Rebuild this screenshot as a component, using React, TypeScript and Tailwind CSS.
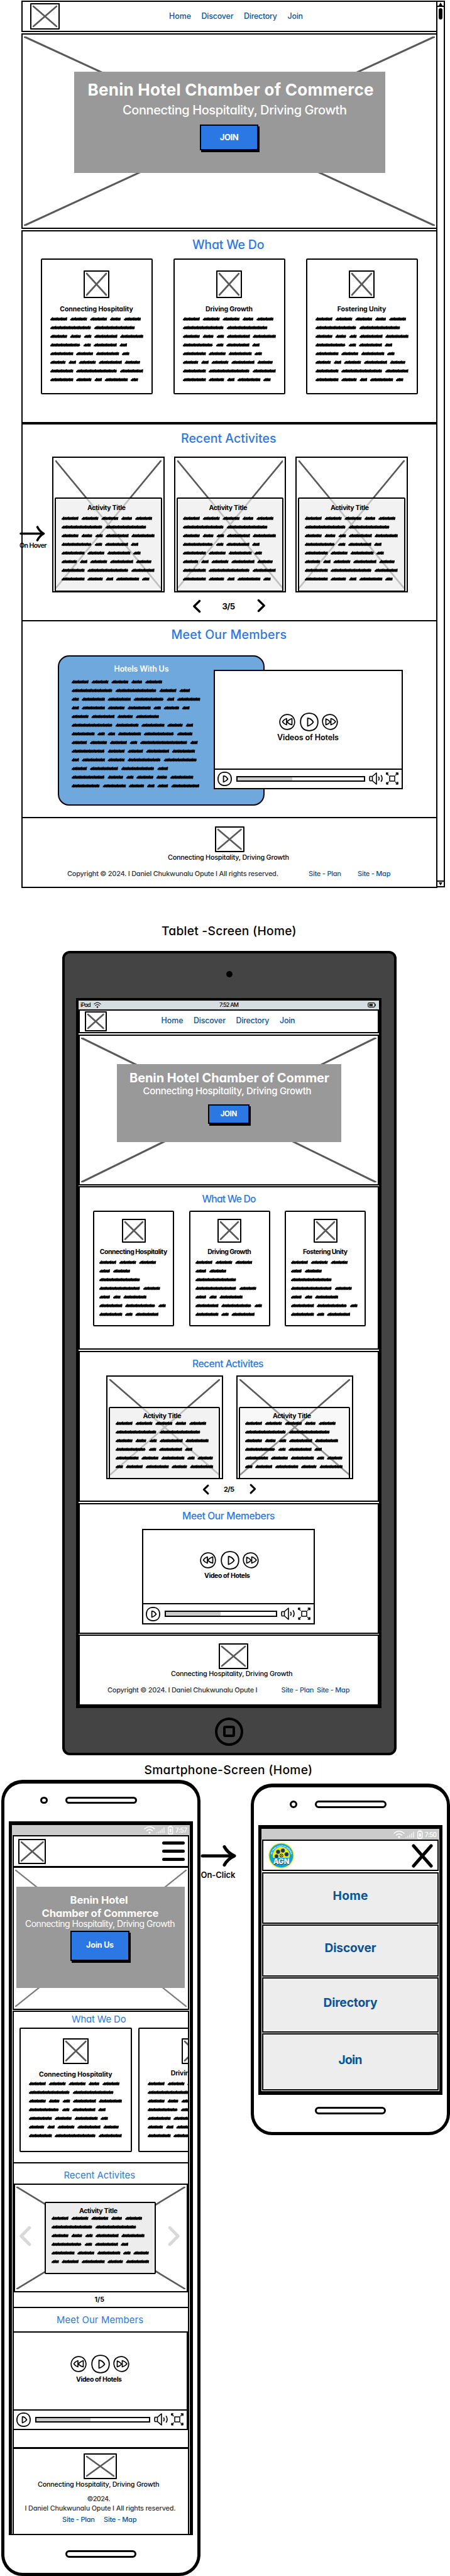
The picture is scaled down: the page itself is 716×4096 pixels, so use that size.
import { useLayoutEffect, useRef, useState, type ReactNode } from "react";

const INK = "#000";

/* One line of text whose tracking is adjusted so that it fills its box. */
function Fit({ children, className }: { children: string; className: string }) {
  const box = useRef<HTMLDivElement>(null);
  const text = useRef<HTMLSpanElement>(null);
  const [tracking, setTracking] = useState(0);
  useLayoutEffect(() => {
    if (!box.current || !text.current) return;
    const room = box.current.getBoundingClientRect().width;
    const natural = text.current.getBoundingClientRect().width;
    setTracking((room - natural) / Math.max(1, children.length - 1));
  }, [children]);
  return (
    <div ref={box} className={`shrink-0 leading-none whitespace-nowrap ${className}`}>
      <span ref={text} className="inline-block" style={{ letterSpacing: tracking }}>
        {children}
      </span>
    </div>
  );
}

function CrossLines({ className = "", stroke = 3, color = "#595959" }: { className?: string; stroke?: number; color?: string }) {
  return (
    <svg className={className} viewBox="0 0 100 100" preserveAspectRatio="none" width="100%" height="100%">
      <g stroke={color} strokeWidth={stroke} strokeLinecap="round">
        <line x1="0" y1="0" x2="100" y2="100" vectorEffect="non-scaling-stroke" />
        <line x1="100" y1="0" x2="0" y2="100" vectorEffect="non-scaling-stroke" />
      </g>
    </svg>
  );
}

function Placeholder({ className }: { className: string }) {
  return (
    <div className={`shrink-0 rounded-[1px] border-2 border-black bg-white p-[3px] ${className}`}>
      <CrossLines className="block overflow-visible" stroke={2.6} />
    </div>
  );
}

/* Word widths, in pixels, for each line of scribbled copy. */
const XS = 11.4, S = 17.2, M = 24.4, L = 26.8, XL = 36.3, F = 44.8, E = 48, N = 52.6, C = 65, D = 75;

const CARD = [[L, L, L, S, L], [C, C], [L, S, XS, XL, XL], [E, XS, XL, XS], [XL, L, XL, XS], [M, XS, L, XL, M], [XL, C, XL], [XL, M, XS, XL, XS]];
const CARD_SHORT = CARD.slice(0, 7);
const CARD_NARROW = [[L, L, L], [S, L], [C], [C, L], [S, XS, XL], [XL, E, XS], [XL, XS, XL]];
const ACTIVITY = [[L, L, L, S, L], [C, C], [L, S, XS, XL, XL], [E, XS, XL, XS], [XL, L, XL, XS, M], [XS, L, XL, M, XL]];
const MEMBERS = [
  [L, L, L, S, L],
  [C, C, L, S],
  [XS, XL, XL, E, XS, XL],
  [XS, XL, L, XL, XS, M, XS],
  [L, XL, M, XL],
  [C, XL, XL, M, XS],
  [XL, XS, XS, XL, E, M],
  [M, L, L, XS, D, XS],
  [N, L, M, XL, XL],
  [XS, XL, L, N, N],
  [M, F, N, S],
  [N, M, XS, L, S, XL],
  [F, XL, M, XS, S, F],
];

const PITCH = 13.78;

function Scribble({ lines, className }: { lines: number[][]; className: string }) {
  let thin = "";
  let thick = "";
  lines.forEach((words, row) => {
    let x = 0;
    const y = row * PITCH + 3.2;
    words.forEach((w, i) => {
      const end = x + w - 0.6;
      let px = x + 0.8;
      thin += `M${px} ${y + 1.4}`;
      let k = i + row;
      while (px < end - 1.8) {
        const rise = k % 3 === 0 ? 1.9 : 1.4;
        thin += `L${Math.min(px + 2.7, end)} ${y - rise}L${Math.min(px + 2, end)} ${y + 1.8}`;
        px += 2.5;
        k += 1;
      }
      thick += `M${x + 1.4} ${y + 0.5}H${end - 0.8}`;
      x += w + 4.9;
    });
  });
  const height = (lines.length - 1) * PITCH + 6.4;
  return (
    <svg className={`block shrink-0 ${className}`} width="214" height={height} viewBox={`0 0 214 ${height}`}>
      <path d={thin} fill="none" stroke={INK} strokeWidth="1.9" strokeLinecap="round" strokeLinejoin="round" />
      <path d={thick} fill="none" stroke={INK} strokeWidth="2.1" strokeLinecap="round" />
    </svg>
  );
}

function Chevron({ dir, className, color = INK, stroke = 3.4 }: { dir: "left" | "right"; className: string; color?: string; stroke?: number }) {
  return (
    <svg className={`shrink-0 overflow-visible ${className}`} viewBox="0 0 10 20" preserveAspectRatio="none">
      <path
        d={dir === "left" ? "M8.8 1.5L1.5 10L8.8 18.5" : "M1.2 1.5L8.5 10L1.2 18.5"}
        fill="none"
        stroke={color}
        strokeWidth={stroke}
        strokeLinecap="round"
        strokeLinejoin="round"
        vectorEffect="non-scaling-stroke"
      />
    </svg>
  );
}

function Arrow({ className }: { className: string }) {
  return (
    <svg className={`shrink-0 overflow-visible ${className}`} viewBox="0 0 55 34">
      <path d="M2 17H52M37 2.5Q42 12 53 17Q42 22 37 31.5" fill="none" stroke={INK} strokeWidth="5" strokeLinecap="round" strokeLinejoin="round" />
    </svg>
  );
}

function Tri({ d }: { d: string }) {
  return <path d={d} fill="none" stroke={INK} strokeWidth="1.7" strokeLinejoin="round" />;
}

function RewindIcon() {
  return (
    <svg className="shrink-0" width="26" height="26" viewBox="0 0 26 26">
      <path d="M13 1.2C20 1 25 6.500 24.800 13.500C24.500 20.500 19 24.800 13 24.800C6.500 24.800 1.200 20 1.200 13C1.200 6.500 6 1.400 13 1.200Z" fill="none" stroke={INK} strokeWidth="1.7" />
      <Tri d="M12 7.500Q7 9.500 5.500 12.800Q8 16.500 12 17.500Z" />
      <Tri d="M20.500 7.500Q15 9.500 12.500 12.800Q16 16.500 20.500 17.500Z" />
    </svg>
  );
}

function ForwardIcon() {
  return (
    <svg className="shrink-0" width="26" height="26" viewBox="0 0 26 26">
      <path d="M12.500 1.200C20 1 24.800 7 24.800 13.500C24.500 20 20 24.800 14 24.800C6 24.500 1 19 1.200 11C1.500 5 6.500 1.400 12.500 1.200Z" fill="none" stroke={INK} strokeWidth="1.7" />
      <Tri d="M6.500 8V17.500Q10.500 16.500 13.500 13Q11 9.500 6.500 8Z" />
      <Tri d="M14.500 7.500V17.500Q19 16.500 22 12.800Q19 8.500 14.500 7.500Z" />
    </svg>
  );
}

function PlayIcon({ size }: { size: number }) {
  return (
    <svg className="shrink-0" width={size} height={size} viewBox="0 0 30 30">
      <path d="M15 1.200C23 1.200 28.800 6 28.800 15C28.800 24 23 28.800 15 28.800C7 28.800 1.200 24 1.200 15C1.200 6 7 1.200 15 1.200Z" fill="none" stroke={INK} strokeWidth={size > 25 ? 1.8 : 2.3} />
      <path d="M12.500 9V21.500Q18 20 21.500 15.300Q18 9 12.500 9Z" fill="none" stroke={INK} strokeWidth={size > 25 ? 1.8 : 2.3} strokeLinejoin="round" />
    </svg>
  );
}

function SpeakerIcon() {
  return (
    <svg className="shrink-0" width="22" height="20" viewBox="0 0 22 20" fill="none" stroke={INK} strokeWidth="1.6" strokeLinejoin="round" strokeLinecap="round">
      <path d="M1.500 6.500H5.500V13.500H1.500Q0.500 10 1.500 6.500ZM5.500 6.500L12 1V19L5.500 13.500" />
      <path d="M15.500 7.500Q17 10 15.500 12.500M19.500 5Q22.500 10 19.500 14.500" />
    </svg>
  );
}

function FullscreenIcon() {
  return (
    <svg className="shrink-0" width="20" height="20" viewBox="0 0 20 20" fill="none" stroke={INK} strokeWidth="1.5" strokeLinecap="round" strokeLinejoin="round">
      <path d="M6 6H14V14H6Z" />
      <path d="M1 1.500L3.800 4.500M19 1.500L15.500 4.500M1.500 18.500L4 15.500M18.800 18.500L15.500 15.500" />
      <path d="M1 3V1.200H3M16.500 1.200H19V3.500M1.300 16.500V18.600H3.200M16.500 18.600H18.800V16" strokeWidth="1.900" />
    </svg>
  );
}

function Video({ caption, className, iconsClass, captionClass, fillClass }: { caption: string; className: string; iconsClass: string; captionClass: string; fillClass: string }) {
  return (
    <div className={`flex shrink-0 flex-col border-2 border-black bg-white ${className}`}>
      <div className={`flex items-center ${iconsClass}`}>
        <RewindIcon />
        <div className="mr-[5px] ml-[7px] shrink-0">
          <PlayIcon size={30} />
        </div>
        <ForwardIcon />
      </div>
      <Fit className={captionClass}>{caption}</Fit>
      <div className="mt-auto flex h-[31.500px] items-center border-t-2 border-black pr-[5px] pl-[4px]">
        <PlayIcon size={23} />
        <div className="mr-[6px] ml-[7px] h-[9.500px] flex-1 border-2 border-black">
          <div className={`h-full bg-[#cbcbcb] ${fillClass}`} />
        </div>
        <SpeakerIcon />
        <div className="ml-[5px] flex">
          <FullscreenIcon />
        </div>
      </div>
    </div>
  );
}

function NavLinks({ className }: { className: string }) {
  return (
    <nav className={`flex gap-[16.500px] text-[12.400px] font-medium text-[#0b5394] ${className}`}>
      <Fit className="w-[35px]">Home</Fit>
      <Fit className="w-[51px]">Discover</Fit>
      <Fit className="w-[53px]">Directory</Fit>
      <Fit className="w-[24.500px]">Join</Fit>
    </nav>
  );
}

function JoinButton({ className, labelClass, label }: { className: string; labelClass: string; label: string }) {
  return (
    <button className={`flex shrink-0 items-center justify-center border-2 border-black bg-[#2b78e4] font-bold text-white shadow-[2px_3px_0_#000] ${className}`}>
      <Fit className={labelClass}>{label}</Fit>
    </button>
  );
}

function Hero({ className, children, cross = "#595959", stroke = 3 }: { className: string; children: ReactNode; cross?: string; stroke?: number }) {
  return (
    <section className={`grid shrink-0 grid-cols-[100%] grid-rows-[100%] border-2 border-black bg-white ${className}`}>
      <div className="col-start-1 row-start-1 px-[2px] py-[3px]">
        <CrossLines className="block" color={cross} stroke={stroke} />
      </div>
      <div className="col-start-1 row-start-1">{children}</div>
    </section>
  );
}

function InfoCard({ title, titleClass, lines, className, logoClass, scribbleClass }: { title: string; titleClass: string; lines: number[][]; className: string; logoClass: string; scribbleClass: string }) {
  return (
    <article className={`flex shrink-0 flex-col overflow-hidden rounded-[2px] border-2 border-black bg-white ${className}`}>
      <Placeholder className={`mx-auto ${logoClass}`} />
      <Fit className={`mx-auto text-[10.500px] font-bold ${titleClass}`}>{title}</Fit>
      <Scribble lines={lines} className={scribbleClass} />
    </article>
  );
}

function ActivityCard({ className, panelClass, titleClass, lines, scribbleClass }: { className: string; panelClass: string; titleClass: string; lines: number[][]; scribbleClass: string }) {
  return (
    <article className={`grid shrink-0 grid-cols-[100%] grid-rows-[100%] border-2 border-black bg-white ${className}`}>
      <div className="col-start-1 row-start-1 px-[3px] py-[4px]">
        <CrossLines className="block" stroke={2.6} />
      </div>
      <div className={`col-start-1 row-start-1 flex flex-col rounded-[2px] border-2 border-black ${panelClass}`}>
        <Fit className={`w-[61px] text-[10.500px] font-bold ${titleClass}`}>Activity Title</Fit>
        <Scribble lines={lines} className={scribbleClass} />
      </div>
    </article>
  );
}

function Desktop() {
  return (
    <div className="relative mt-[1px] ml-[34px] flex h-[1410px] w-[674px] shrink-0">
      <div className="flex w-[662px] shrink-0 flex-col">
        <header className="flex h-[50px] shrink-0 items-start border-2 border-black">
          <Placeholder className="mt-[2px] ml-[12px] h-[42px] w-[47px]" />
          <NavLinks className="mt-[17px] ml-[174px]" />
        </header>
        <Hero className="mt-[2px] h-[311px]">
          <div className="mt-[58.500px] ml-[82px] flex h-[161px] w-[495px] flex-col bg-[#999] text-white">
            <Fit className="mt-[16.500px] ml-[21.500px] w-[455px] text-[26px] font-bold">Benin Hotel Chamber of Commerce</Fit>
            <Fit className="mt-[9px] ml-[77px] w-[357px] text-[20px] font-medium">Connecting Hospitality, Driving Growth</Fit>
            <JoinButton className="mt-[13px] ml-[200px] h-[41px] w-[93px]" labelClass="w-[30px] text-[13px]" label="JOIN" />
          </div>
        </Hero>
        <section className="mt-[2px] flex h-[307px] shrink-0 flex-col border-2 border-black">
          <Fit className="mt-[11.500px] ml-[270px] w-[114.500px] text-[19.500px] font-medium text-[#2b78e4]">What We Do</Fit>
          <div className="mt-[12px] ml-[28.500px] flex gap-[33px]">
            <InfoCard title="Connecting Hospitality" titleClass="mt-[12.500px] w-[116.500px]" lines={CARD} className="h-[215.500px] w-[178px]" logoClass="mt-[17px] h-[44px] w-[41px]" scribbleClass="mt-[7px] ml-[13px]" />
            <InfoCard title="Driving Growth" titleClass="mt-[12.500px] w-[75px]" lines={CARD} className="h-[215.500px] w-[178px]" logoClass="mt-[17px] h-[44px] w-[41px]" scribbleClass="mt-[7px] ml-[13px]" />
            <InfoCard title="Fostering Unity" titleClass="mt-[12.500px] w-[77.500px]" lines={CARD} className="h-[215.500px] w-[178px]" logoClass="mt-[17px] h-[44px] w-[41px]" scribbleClass="mt-[7px] ml-[13px]" />
          </div>
        </section>
        <section className="flex h-[315px] shrink-0 flex-col border-2 border-black">
          <Fit className="mt-[12.500px] ml-[252px] w-[151.500px] text-[19.500px] font-medium text-[#2b78e4]">Recent Activites</Fit>
          <div className="mt-[18.500px] ml-[47px] flex gap-[15px]">
            {[0, 1, 2].map((i) => (
              <ActivityCard key={i} className="h-[216px] w-[178.500px]" panelClass="mt-[63px] mb-[-1px] ml-[2px] w-[170.500px] bg-[#ededed]/70" titleClass="mt-[10px] ml-[50px]" lines={CARD} scribbleClass="mt-[7.500px] ml-[8.500px]" />
            ))}
          </div>
          <div className="mt-[12px] ml-[271px] flex h-[21px] items-center">
            <Chevron dir="left" className="h-[20px] w-[12px]" />
            <Fit className="ml-[34.500px] w-[20.500px] text-[13px] font-bold">3/5</Fit>
            <Chevron dir="right" className="mb-[2px] ml-[36px] h-[20px] w-[12px]" />
          </div>
        </section>
        <section className="-mt-[2px] flex h-[315px] shrink-0 flex-col border-2 border-black">
          <Fit className="mt-[12px] ml-[236.500px] w-[183.500px] text-[19.500px] font-medium text-[#2b78e4]">Meet Our Members</Fit>
          <div className="mt-[22px] ml-[56px] grid">
            <div className="col-start-1 row-start-1 flex h-[239px] w-[329px] flex-col rounded-[18px] border-2 border-black bg-[#6fa8dc]">
              <Fit className="mt-[14px] ml-[87.500px] w-[87px] text-[12.500px] font-semibold text-white">Hotels With Us</Fit>
              <Scribble lines={MEMBERS} className="mt-[11px] ml-[20px]" />
            </div>
            <Video caption="Videos of Hotels" className="col-start-1 row-start-1 mt-[23px] ml-[248px] h-[190.500px] w-[300.500px]" iconsClass="mt-[66px] ml-[102px]" captionClass="mt-[4px] ml-[99px] w-[98px] text-[12.600px] font-semibold" fillClass="w-[43.500%]" />
          </div>
        </section>
        <footer className="-mt-[2px] flex h-[113px] shrink-0 flex-col border-2 border-black">
          <Placeholder className="mt-[13px] ml-[306px] h-[41px] w-[46.500px]" />
          <Fit className="mt-[3.500px] ml-[231px] w-[193px] text-[10.800px] font-medium">Connecting Hospitality, Driving Growth</Fit>
          <div className="mt-[14.500px] ml-[71px] flex text-[11px] font-medium">
            <Fit className="w-[336px] text-[#333]">Copyright © 2024. I Daniel Chukwunalu Opute I All rights reserved.</Fit>
            <Fit className="ml-[48px] w-[52px] text-[#0b5394]">Site - Plan</Fit>
            <Fit className="ml-[26px] w-[52.500px] text-[#0b5394]">Site - Map</Fit>
          </div>
        </footer>
      </div>
      <div className="-ml-[2px] flex w-[14px] shrink-0 flex-col items-center border-2 border-black bg-white">
        <div className="flex h-[8px] w-full items-center justify-center border-b-2 border-black">
          <svg width="6" height="5" viewBox="0 0 6 5"><path d="M3 0L6 5H0Z" /></svg>
        </div>
        <div className="mt-[1.500px] h-[18px] w-[6px] rounded-[3px] bg-black" />
        <div className="mt-auto flex h-[9px] w-full items-center justify-center border-t-2 border-black">
          <svg width="6" height="5" viewBox="0 0 6 5"><path d="M0 0H6L3 5Z" /></svg>
        </div>
      </div>
      <div className="absolute top-[835px] left-[-3px] flex w-[44px] flex-col">
        <svg className="h-[25px] w-[41px]" viewBox="0 0 41 25">
          <path d="M2 12.500H38M28.500 2Q32 9 38.500 12.500Q32 16 28.500 23" fill="none" stroke={INK} strokeWidth="3.600" strokeLinecap="round" strokeLinejoin="round" />
        </svg>
        <Fit className="mt-[1.500px] w-[43.500px] text-[10.500px] font-semibold">On Hover</Fit>
      </div>
    </div>
  );
}

function Tablet() {
  return (
    <div className="mt-[22px] ml-[99px] flex h-[1279px] w-[532px] shrink-0 flex-col rounded-[12px] border-[4px] border-black bg-[#444]">
      <div className="mt-[28px] ml-[257px] h-[10px] w-[10px] shrink-0 rounded-full bg-black" />
      <div className="mt-[32.500px] ml-[18px] flex h-[1129px] w-[485.500px] shrink-0 flex-col border-4 border-b-[6px] border-black bg-white">
        <div className="flex h-[14.500px] shrink-0 items-center bg-[#d6dde0] pr-[5px] pl-[3px]">
          <Fit className="w-[16.500px] text-[9px] font-medium">iPad</Fit>
          <svg className="ml-[4.500px]" width="12" height="10" viewBox="0 0 12 10" fill="none" stroke="#222" strokeWidth="1.100" strokeLinecap="round">
            <path d="M0.800 3.500Q6 -1.200 11.200 3.500M2.700 5.800Q6 2.800 9.300 5.800" />
            <circle cx="6" cy="8.300" r="0.800" fill="#222" />
          </svg>
          <Fit className="ml-[188px] w-[31px] text-[9px] font-medium">7:52 AM</Fit>
          <svg className="ml-auto" width="13" height="8" viewBox="0 0 13 8">
            <rect x="0.700" y="0.700" width="10.600" height="6.600" rx="1.800" fill="none" stroke="#111" strokeWidth="1.200" />
            <rect x="2.500" y="2.300" width="5.500" height="3.400" fill="#111" />
            <path d="M12.300 2.500V5.500" stroke="#111" strokeWidth="1.200" />
          </svg>
        </div>
        <header className="flex h-[38px] shrink-0 items-start border-2 border-black">
          <Placeholder className="mt-[1px] ml-[8px] h-[32px] w-[34.500px]" />
          <NavLinks className="mt-[9.500px] ml-[87px]" />
        </header>
        <Hero className="mt-[1.500px] h-[240px]">
          <div className="mt-[45px] ml-[58.500px] flex h-[124px] w-[357px] flex-col bg-[#999] text-white">
            <Fit className="mt-[12.500px] ml-[20.500px] w-[318px] text-[20px] font-bold">Benin Hotel Chamber of Commer</Fit>
            <Fit className="mt-[2.500px] ml-[42px] w-[268px] text-[15px] font-medium">Connecting Hospitality, Driving Growth</Fit>
            <JoinButton className="mt-[14.500px] ml-[145px] h-[31px] w-[66.500px]" labelClass="w-[26.500px] text-[11.500px]" label="JOIN" />
          </div>
        </Hero>
        <section className="mt-[1.500px] flex h-[260px] shrink-0 flex-col border-2 border-black">
          <Fit className="mt-[10.500px] ml-[194.500px] w-[86px] text-[15.600px] font-medium text-[#2b78e4]">What We Do</Fit>
          <div className="mt-[10.500px] ml-[21px] flex gap-[23.500px]">
            <InfoCard title="Connecting Hospitality" titleClass="mt-[10.500px] w-[107.500px]" lines={CARD_NARROW} className="h-[184px] w-[129px]" logoClass="mt-[11.500px] h-[37.500px] w-[38px]" scribbleClass="mt-[7px] ml-[8px]" />
            <InfoCard title="Driving Growth" titleClass="mt-[10.500px] w-[69.500px]" lines={CARD_NARROW} className="h-[184px] w-[129px]" logoClass="mt-[11.500px] h-[37.500px] w-[38px]" scribbleClass="mt-[7px] ml-[8px]" />
            <InfoCard title="Fostering Unity" titleClass="mt-[10.500px] w-[71px]" lines={CARD_NARROW} className="h-[184px] w-[129px]" logoClass="mt-[11.500px] h-[37.500px] w-[38px]" scribbleClass="mt-[7px] ml-[8px]" />
          </div>
        </section>
        <section className="mt-[1.500px] flex h-[240.500px] shrink-0 flex-col border-2 border-black">
          <Fit className="mt-[11px] ml-[179px] w-[113.500px] text-[15.600px] font-medium text-[#2b78e4]">Recent Activites</Fit>
          <div className="mt-[11px] ml-[42px] flex gap-[20.500px]">
            <ActivityCard className="h-[165px] w-[186px]" panelClass="mt-[47.500px] mb-[-2px] ml-[2px] w-[177px] bg-[#ededed]/70" titleClass="mt-[8px] ml-[52.500px]" lines={ACTIVITY} scribbleClass="mt-[3px] ml-[8.500px]" />
            <ActivityCard className="h-[165px] w-[186px]" panelClass="mt-[47.500px] mb-[-2px] ml-[2px] w-[177px] bg-[#ededed]/40" titleClass="mt-[8px] ml-[52.500px]" lines={ACTIVITY} scribbleClass="mt-[3px] ml-[8.500px]" />
          </div>
          <div className="mt-[8.500px] ml-[196px] flex h-[15px] items-center">
            <Chevron dir="left" className="h-[15px] w-[9px]" stroke={3} />
            <Fit className="ml-[24px] w-[17px] text-[11px] font-bold">2/5</Fit>
            <Chevron dir="right" className="mb-[1px] ml-[24.500px] h-[15px] w-[9px]" stroke={3} />
          </div>
        </section>
        <section className="mt-[1.500px] flex h-[208px] shrink-0 flex-col border-2 border-black">
          <Fit className="mt-[11px] ml-[163px] w-[147.500px] text-[15.600px] font-medium text-[#2b78e4]">Meet Our Memebers</Fit>
          <Video caption="Video of Hotels" className="mt-[12.500px] ml-[99px] h-[152px] w-[274.500px]" iconsClass="mt-[33px] ml-[89.500px]" captionClass="mt-[5.500px] ml-[97px] w-[73px] text-[10.500px] font-bold" fillClass="w-1/2" />
        </section>
        <footer className="mt-[1.500px] flex h-[112px] shrink-0 flex-col border-2 border-b-0 border-black">
          <Placeholder className="mt-[11.500px] ml-[220.500px] h-[41px] w-[47px]" />
          <Fit className="mt-[3.500px] ml-[145px] w-[193.500px] text-[10.800px] font-medium">Connecting Hospitality, Driving Growth</Fit>
          <div className="mt-[14px] ml-[44px] flex text-[11px] font-medium">
            <Fit className="w-[238.500px] text-[#333]">Copyright © 2024. I Daniel Chukwunalu Opute I</Fit>
            <Fit className="ml-[38px] w-[52px] text-[#0b5394]">Site - Plan</Fit>
            <Fit className="ml-[4.500px] w-[52.500px] text-[#0b5394]">Site - Map</Fit>
          </div>
        </footer>
      </div>
      <div className="mt-[15px] ml-[239px] flex h-[45px] w-[45px] shrink-0 items-center justify-center rounded-full border-[4.500px] border-black">
        <div className="h-[18.500px] w-[18.500px] rounded-[3.500px] border-4 border-black" />
      </div>
    </div>
  );
}

function PhoneShell({ className, screenClass, time, children, foot }: { className: string; screenClass: string; time: string; children: ReactNode; foot: string }) {
  return (
    <div className={`flex shrink-0 flex-col border-[5px] border-t-[6px] border-black bg-white ${className}`}>
      <div className="mt-[21px] ml-[57.500px] flex h-[11.500px] shrink-0">
        <div className="h-[11.500px] w-[12px] rounded-full border-[3px] border-black" />
        <div className="ml-[28px] h-[11.500px] w-[114px] rounded-full border-[3px] border-black" />
      </div>
      <div className={`mt-[27.500px] ml-[7.500px] flex w-[293px] shrink-0 flex-col border-x-[5px] border-t-[6px] border-black ${screenClass}`}>
        <div className="flex h-[16.500px] shrink-0 items-center justify-end gap-[4px] bg-[#cbcbcb] pr-[4px]">
          <svg width="46" height="14" viewBox="0 0 46 14" className="shrink-0 overflow-visible" fill="none" stroke="#fff" strokeLinecap="round">
            <path d="M1 5Q9 -2 17 5M4.500 8Q9 4 13.500 8" strokeWidth="1.500" />
            <circle cx="9" cy="11" r="1.600" fill="#fff" stroke="none" />
            <path d="M20 12V11M23 12V9.500M26 12V7.500M29 12V5M32 12V2.500" strokeWidth="1.200" strokeLinecap="butt" />
            <rect x="38.700" y="2" width="7" height="11" rx="1.800" strokeWidth="1.400" />
            <path d="M42.200 4.800V10.500" strokeWidth="3" strokeLinecap="butt" />
            <path d="M40.800 1H43.600" strokeWidth="1.400" />
          </svg>
          <Fit className="w-[19px] text-[10px] font-medium text-white">{time}</Fit>
        </div>
        {children}
      </div>
      <div className={`h-[12px] w-[113.500px] shrink-0 rounded-full border-[3px] border-black ${foot}`} />
    </div>
  );
}

function PhoneHome() {
  return (
    <PhoneShell className="mt-[6px] ml-[1.500px] h-[1266px] w-[317px] rounded-[34px]" screenClass="h-[1135px] border-b-[2px]" time="7:57" foot="mt-[24.500px] ml-[97px]">
      <header className="mx-[1px] flex h-[50.500px] shrink-0 items-start border-2 border-black">
        <Placeholder className="mt-[3.500px] ml-[6.500px] h-[40px] w-[44.500px]" />
        <div className="mt-[7.500px] mr-[5px] ml-auto flex w-[36.500px] flex-col gap-[8px]">
          <span className="h-[5px] rounded-full bg-black" />
          <span className="h-[5px] rounded-full bg-black" />
          <span className="h-[5px] rounded-full bg-black" />
        </div>
      </header>
      <Hero className="mx-[1px] -mt-[1px] h-[228px]" cross="#7d7d7d" stroke={2.2}>
        <div className="mt-[30px] ml-[3.500px] flex h-[161px] w-[268px] flex-col bg-[#999] text-white">
          <Fit className="mt-[13px] ml-[86px] w-[92px] text-[16.600px] font-bold">Benin Hotel</Fit>
          <Fit className="mt-[4px] ml-[41px] w-[186px] text-[16.600px] font-bold">Chamber of Commerce</Fit>
          <Fit className="mt-[1.500px] ml-[14.500px] w-[238.500px] text-[14px]">Connecting Hospitality, Driving Growth</Fit>
          <JoinButton className="mt-[4px] ml-[86.500px] h-[48px] w-[94px]" labelClass="w-[44px] text-[12.500px]" label="Join Us" />
        </div>
      </Hero>
      <section className="mx-[1px] mt-[1.500px] flex h-[243px] shrink-0 flex-col overflow-hidden border-2 border-black">
        <Fit className="mt-[5px] ml-[92px] w-[86.500px] text-[14.800px] text-[#2b78e4]">What We Do</Fit>
        <div className="mt-[4.500px] ml-[9px] flex gap-[10.500px]">
          <InfoCard title="Connecting Hospitality" titleClass="mt-[12px] w-[116.500px]" lines={CARD_SHORT} className="h-[198px] w-[178.500px]" logoClass="mt-[15.500px] h-[40.500px] w-[41.500px]" scribbleClass="mt-[5.500px] ml-[13px]" />
          <InfoCard title="Driving Growth" titleClass="mt-[10.500px] w-[75px]" lines={CARD_SHORT} className="h-[198px] w-[178.500px]" logoClass="mt-[15.500px] h-[40.500px] w-[41.500px]" scribbleClass="mt-[7px] ml-[13px]" />
        </div>
      </section>
      <section className="mx-[1px] -mt-[2px] flex h-[231.500px] shrink-0 flex-col border-2 border-black">
        <Fit className="mt-[11.500px] ml-[79.500px] w-[113.500px] text-[14.800px] text-[#2b78e4]">Recent Activites</Fit>
        <div className="mt-[5px] grid h-[173px] w-full grid-cols-[100%] grid-rows-[100%] border-2 border-black">
          <div className="col-start-1 row-start-1 px-[2px] py-[3px]">
            <CrossLines className="block" stroke={2.6} />
          </div>
          <div className="col-start-1 row-start-1 flex items-start">
            <Chevron dir="left" className="mt-[66px] ml-[7px] h-[31px] w-[18px]" color="#d9d9d9" stroke={5} />
            <div className="mt-[27px] ml-[22px] flex h-[115px] w-[177px] shrink-0 flex-col rounded-[2px] border-2 border-black bg-[#ededed]">
              <Fit className="mt-[8px] ml-[53px] w-[61px] text-[10.500px] font-bold">Activity Title</Fit>
              <Scribble lines={ACTIVITY} className="mt-[3px] ml-[8.500px]" />
            </div>
            <Chevron dir="right" className="mt-[66px] ml-[20px] h-[31px] w-[18px]" color="#d9d9d9" stroke={5} />
          </div>
        </div>
        <Fit className="mt-[7.500px] ml-[128.500px] w-[15.500px] text-[10.500px] font-bold">1/5</Fit>
      </section>
      <section className="mx-[1px] -mt-[2px] flex h-[225px] shrink-0 flex-col border-2 border-black">
        <Fit className="mt-[12px] ml-[68px] w-[138px] text-[14.800px] text-[#2b78e4]">Meet Our Members</Fit>
        <Video caption="Video of Hotels" className="mt-[10px] -ml-[2px] h-[157.500px] w-[279px]" iconsClass="mt-[35px] ml-[90px]" captionClass="mt-[5.500px] ml-[99px] w-[73px] text-[10.500px] font-bold" fillClass="w-[48%]" />
      </section>
      <footer className="mx-[1px] -mt-[1px] flex flex-1 flex-col border-2 border-b-0 border-black">
        <Placeholder className="mt-[7px] ml-[110.500px] h-[41px] w-[53px]" />
        <Fit className="mt-[4px] ml-[38px] w-[193.500px] text-[10.800px] font-medium">Connecting Hospitality, Driving Growth</Fit>
        <Fit className="mt-[12.500px] ml-[116.500px] w-[37px] text-[10.800px] font-medium text-[#333]">©2024.</Fit>
        <Fit className="mt-[3.500px] ml-[17.500px] w-[240px] text-[10.800px] font-medium text-[#333]">I Daniel Chukwunalu Opute I All rights reserved.</Fit>
        <div className="mt-[7px] ml-[77px] flex gap-[14px] text-[11px] font-medium text-[#0b5394]">
          <Fit className="w-[52px]">Site - Plan</Fit>
          <Fit className="w-[52.500px]">Site - Map</Fit>
        </div>
      </footer>
    </PhoneShell>
  );
}

function GuildLogo() {
  return (
    <svg className="mt-[3px] ml-[8px] shrink-0 overflow-visible" width="41" height="41" viewBox="0 0 41 41">
      <circle cx="20.500" cy="20.500" r="20.300" fill="#f7ec13" />
      <circle cx="20.500" cy="20.500" r="19" fill="#0fa5d8" />
      <path d="M7.500 24A13.500 13.500 0 1 1 33.500 24Z" fill="#f7ec13" />
      <g fill="#2f3033" stroke="#0fa5d8" strokeWidth="0.500">
        <circle cx="15.500" cy="14.500" r="3.200" />
        <circle cx="23" cy="12.500" r="3.200" />
        <circle cx="29" cy="18.500" r="3.200" />
        <circle cx="13" cy="21.500" r="3" />
      </g>
      <g fill="none" stroke="#2f3033" strokeWidth="1">
        <circle cx="20.800" cy="20.500" r="2.600" />
        <path d="M18.500 18.500L23 22.500M23 18.500L18.500 22.500" />
      </g>
      <path id="guild-arc" d="M6 27A15.400 15.400 0 1 1 35 27" fill="none" />
      <text fill="#fff" fontSize="3.100" fontWeight="700">
        <textPath href="#guild-arc" startOffset="50%" textAnchor="middle">ACTORS GUILD OF NIGERIA</textPath>
      </text>
      <text x="21.300" y="34.500" textAnchor="middle" fill="#2f3033" fontSize="11.500" fontWeight="800">AGN</text>
      <text x="20.700" y="34" textAnchor="middle" fill="#fff" fontSize="11.500" fontWeight="800">AGN</text>
      <path d="M20.500 36V38" stroke="#d22" strokeWidth="1" />
    </svg>
  );
}

function MenuItem({ className, labelClass, label }: { className: string; labelClass: string; label: string }) {
  return (
    <div className={`mx-[1px] flex shrink-0 items-center justify-center border-2 border-black bg-[#ededed] pb-[7px] text-[19.200px] font-bold text-[#0b5394] ${className}`}>
      <Fit className={labelClass}>{label}</Fit>
    </div>
  );
}

function PhoneMenu() {
  return (
    <PhoneShell className="mt-[12.500px] ml-[24px] h-[559px] w-[317.500px] rounded-[34px]" screenClass="h-[428.500px] border-b-[6px]" time="7:50" foot="mt-[19px] ml-[97px]">
      <header className="mx-[1px] flex h-[50.500px] shrink-0 items-start border-2 border-black">
        <GuildLogo />
        <svg className="mt-[5px] mr-[7px] ml-auto" width="34" height="38" viewBox="0 0 34 38">
          <path d="M3 3L31 35M31 3L3 35" stroke={INK} strokeWidth="5" strokeLinecap="round" />
        </svg>
      </header>
      <MenuItem className="mt-[1.500px] h-[82px]" labelClass="w-[56px]" label="Home" />
      <MenuItem className="mt-[1px] h-[83px]" labelClass="w-[82px]" label="Discover" />
      <MenuItem className="mt-[1.500px] h-[88px]" labelClass="w-[86px]" label="Directory" />
      <MenuItem className="mt-[1px] h-[91px]" labelClass="w-[38px]" label="Join" />
    </PhoneShell>
  );
}

export default function App() {
  return (
    <main className="flex h-[4096px] w-[716px] flex-col overflow-hidden bg-white font-['Inter','Liberation_Sans',sans-serif] text-black [font-feature-settings:'cv11']">
      <Desktop />
      <Fit className="mt-[60px] ml-[257px] w-[214.500px] text-[19.200px] font-medium">Tablet -Screen (Home)</Fit>
      <Tablet />
      <Fit className="mt-[13.500px] ml-[229.500px] w-[267.500px] text-[19.200px] font-medium">Smartphone-Screen (Home)</Fit>
      <div className="flex items-start">
        <PhoneHome />
        <div className="mt-[110px] ml-[1px] flex w-[55px] shrink-0 flex-col">
          <Arrow className="h-[34px] w-[55px]" />
          <Fit className="mt-[7px] w-[55px] text-[13px] font-semibold">On-Click</Fit>
        </div>
        <PhoneMenu />
      </div>
    </main>
  );
}
